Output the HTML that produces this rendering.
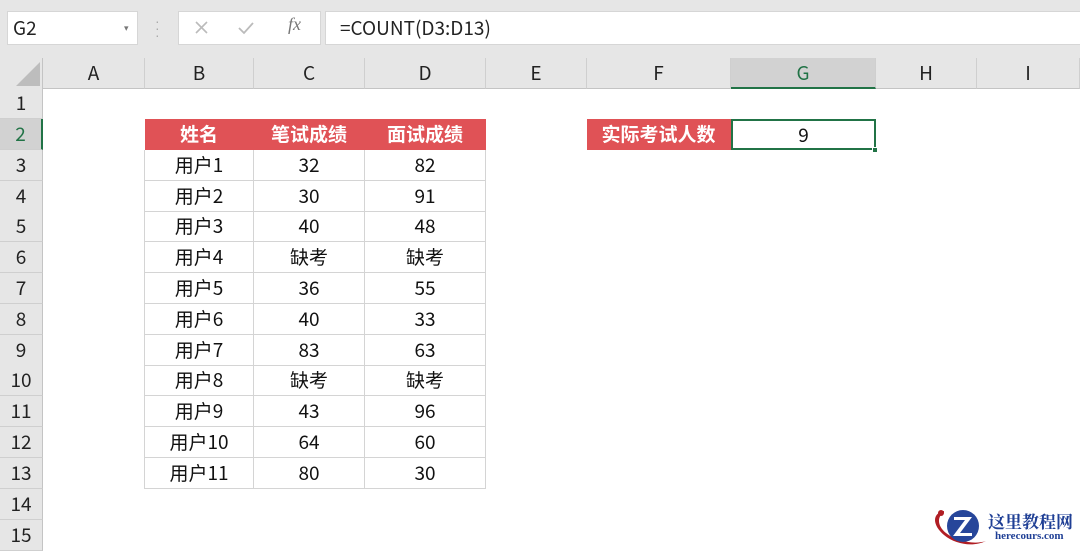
<!DOCTYPE html>
<html><head><meta charset="utf-8"><style>
*{margin:0;padding:0;box-sizing:border-box}
body{width:1080px;height:549px;overflow:hidden;background:#fff;position:relative;font-family:"Liberation Sans","Noto Sans CJK SC",sans-serif;color:#111}
div{position:absolute}
.top{left:0;top:0;width:1080px;height:58px;background:#e6e6e6}
.box{background:#fff;border:1px solid #d6d6d6}
.ch{top:58px;height:31px;background:#e6e6e6;border-right:1px solid #cfcfcf;border-bottom:1px solid #c4c4c4;font:19px "Noto Sans CJK SC",sans-serif;text-align:center;line-height:30px;color:#222}
.rh{left:0;width:43px;height:31px;background:#e6e6e6;border-bottom:1px solid #cfcfcf;border-right:1px solid #c4c4c4;font:19px "Noto Sans CJK SC",sans-serif;text-align:center;line-height:30px;color:#222}
.c{height:31px;border-right:1px solid #d4d4d4;border-bottom:1px solid #d4d4d4;font:19px "Noto Sans CJK SC",sans-serif;text-align:center;line-height:30px;color:#111}
.h{background:#e05256;color:#fff;font-weight:bold;border-color:#e05256}
</style></head><body>
<div class="top"></div>
<div class="box" style="left:7px;top:11px;width:131px;height:34px;font:19px 'Noto Sans CJK SC',sans-serif;line-height:32px;padding-left:5px;color:#222">G2<span style="position:absolute;left:116px;top:0;font-size:9px;color:#777">▾</span></div>
<div style="left:155px;top:18px;color:#aaa;font-size:14px;line-height:7px">·<br>·<br>·</div>
<div class="box" style="left:178px;top:11px;width:143px;height:34px"></div>
<svg style="position:absolute;left:194px;top:20px" width="60" height="16" viewBox="0 0 60 16">
<path d="M2 2 L13 13 M13 2 L2 13" stroke="#bbb" stroke-width="1.6" fill="none"/>
<path d="M45 8 L50 13 L59 3" stroke="#bbb" stroke-width="1.8" fill="none"/>
</svg>
<div style="left:288px;top:14px;color:#777;font:italic 18px 'Liberation Serif',serif">fx</div>
<div class="box" style="left:325px;top:11px;width:760px;height:34px;font:19px 'Noto Sans CJK SC',sans-serif;line-height:32px;padding-left:14px;color:#222">=COUNT(D3:D13)</div>

<div style="left:0;top:58px;width:43px;height:31px;background:#e6e6e6;border-right:1px solid #c4c4c4;border-bottom:1px solid #c4c4c4"></div>
<div style="left:16px;top:62px;width:0;height:0;border-left:24px solid transparent;border-bottom:24px solid #bdbdbd"></div>
<div class="ch" style="left:43px;width:102px">A</div>
<div class="ch" style="left:145px;width:109px">B</div>
<div class="ch" style="left:254px;width:111px">C</div>
<div class="ch" style="left:365px;width:121px">D</div>
<div class="ch" style="left:486px;width:101px">E</div>
<div class="ch" style="left:587px;width:144px">F</div>
<div class="ch" style="left:731px;width:145px;background:#d2d2d2;color:#217346;border-bottom:2px solid #217346">G</div>
<div class="ch" style="left:876px;width:101px">H</div>
<div class="ch" style="left:977px;width:103px">I</div>

<div class="rh" style="top:88px">1</div>
<div class="rh" style="top:119px;background:#d2d2d2;color:#217346;border-right:2px solid #217346">2</div>
<div class="rh" style="top:150px">3</div>
<div class="rh" style="top:181px">4</div>
<div class="rh" style="top:211px">5</div>
<div class="rh" style="top:242px">6</div>
<div class="rh" style="top:273px">7</div>
<div class="rh" style="top:304px">8</div>
<div class="rh" style="top:335px">9</div>
<div class="rh" style="top:365px">10</div>
<div class="rh" style="top:396px">11</div>
<div class="rh" style="top:427px">12</div>
<div class="rh" style="top:458px">13</div>
<div class="rh" style="top:489px">14</div>
<div class="rh" style="top:520px">15</div>

<div class="c h" style="left:145px;top:119px;width:109px">姓名</div>
<div class="c h" style="left:254px;top:119px;width:111px">笔试成绩</div>
<div class="c h" style="left:365px;top:119px;width:121px">面试成绩</div>
<div style="left:144px;top:150px;width:1px;height:339px;background:#d4d4d4"></div>

<div class="c" style="left:145px;top:150px;width:109px">用户1</div><div class="c" style="left:254px;top:150px;width:111px">32</div><div class="c" style="left:365px;top:150px;width:121px">82</div>
<div class="c" style="left:145px;top:181px;width:109px">用户2</div><div class="c" style="left:254px;top:181px;width:111px">30</div><div class="c" style="left:365px;top:181px;width:121px">91</div>
<div class="c" style="left:145px;top:211px;width:109px">用户3</div><div class="c" style="left:254px;top:211px;width:111px">40</div><div class="c" style="left:365px;top:211px;width:121px">48</div>
<div class="c" style="left:145px;top:242px;width:109px">用户4</div><div class="c" style="left:254px;top:242px;width:111px">缺考</div><div class="c" style="left:365px;top:242px;width:121px">缺考</div>
<div class="c" style="left:145px;top:273px;width:109px">用户5</div><div class="c" style="left:254px;top:273px;width:111px">36</div><div class="c" style="left:365px;top:273px;width:121px">55</div>
<div class="c" style="left:145px;top:304px;width:109px">用户6</div><div class="c" style="left:254px;top:304px;width:111px">40</div><div class="c" style="left:365px;top:304px;width:121px">33</div>
<div class="c" style="left:145px;top:335px;width:109px">用户7</div><div class="c" style="left:254px;top:335px;width:111px">83</div><div class="c" style="left:365px;top:335px;width:121px">63</div>
<div class="c" style="left:145px;top:365px;width:109px">用户8</div><div class="c" style="left:254px;top:365px;width:111px">缺考</div><div class="c" style="left:365px;top:365px;width:121px">缺考</div>
<div class="c" style="left:145px;top:396px;width:109px">用户9</div><div class="c" style="left:254px;top:396px;width:111px">43</div><div class="c" style="left:365px;top:396px;width:121px">96</div>
<div class="c" style="left:145px;top:427px;width:109px">用户10</div><div class="c" style="left:254px;top:427px;width:111px">64</div><div class="c" style="left:365px;top:427px;width:121px">60</div>
<div class="c" style="left:145px;top:458px;width:109px">用户11</div><div class="c" style="left:254px;top:458px;width:111px">80</div><div class="c" style="left:365px;top:458px;width:121px">30</div>

<div class="c h" style="left:587px;top:119px;width:144px">实际考试人数</div>
<div class="c" style="left:731px;top:119px;width:145px;border:2px solid #217346;line-height:27px">9</div>
<div style="left:872px;top:147px;width:6px;height:6px;background:#217346;border:1px solid #fff"></div>

<svg style="position:absolute;left:930px;top:505px" width="60" height="44" viewBox="0 0 60 44">
<path d="M14 6 C2 8 2 20 14 30 C26 40 44 42 56 36 C44 40 26 36 16 28 C6 20 8 10 14 8Z" fill="#b01e24"/>
<circle cx="11" cy="8" r="3" fill="#b01e24"/>
<circle cx="33" cy="21" r="16" fill="#27469a"/>
<path d="M24 12 H42 L30 28 H42 V31 H23 L35 15 H24Z" fill="#fff"/>
</svg>
<div style="left:988px;top:508px;font:bold 17px 'Noto Serif CJK SC',serif;color:#1f3f95">这里教程网</div>
<div style="left:995px;top:530px;font:bold 11px 'Liberation Serif',serif;color:#1f3f95">herecours.com</div>
</body></html>
